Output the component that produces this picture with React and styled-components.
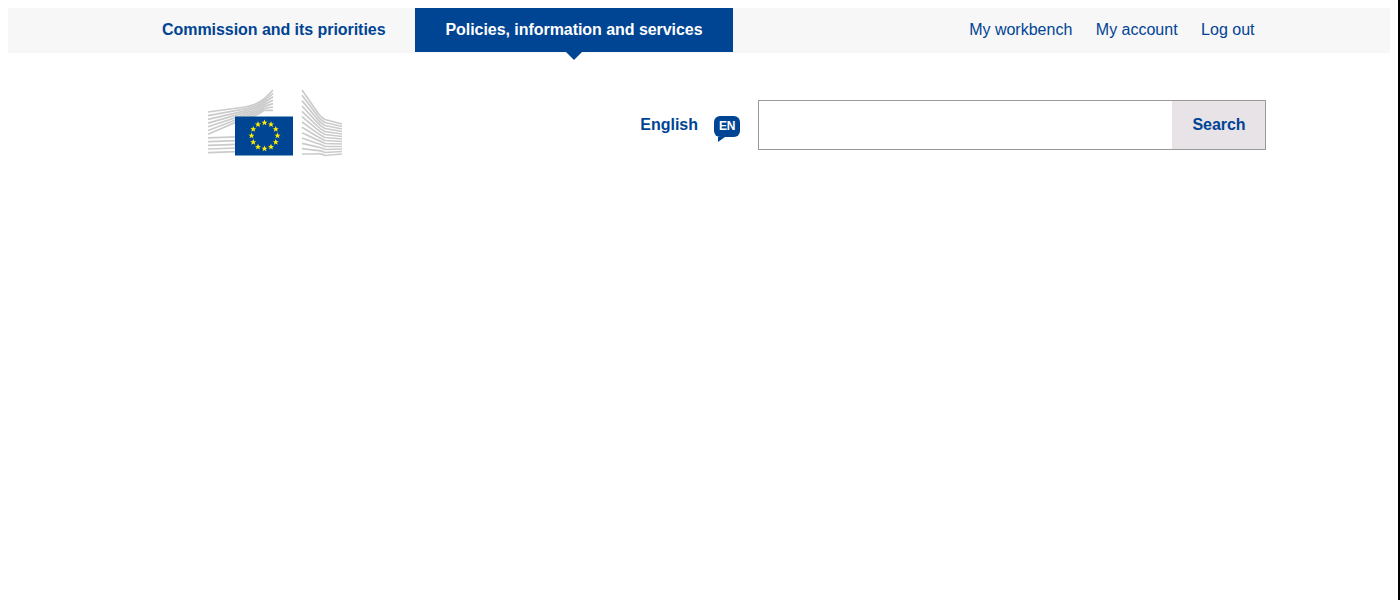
import React from "react";
import styled, { createGlobalStyle } from "styled-components";

const GlobalStyle = createGlobalStyle`
    html, body {
        margin: 0;
        padding: 0;
        background: #fff;
        overflow: hidden;
    }
    body {
        font-family: "Liberation Sans", Arial, sans-serif;
    }
`;

const Page = styled.div`
    box-sizing: border-box;
    height: 100vh;
    padding: 8px 8px 0 8px;
    border-right: 2px solid #000;
`;

const TopBar = styled.nav`
    display: flex;
    justify-content: space-between;
    height: 45px;
    padding: 0 135.5px 0 124px;
    background: #f7f7f7;
`;

const TabList = styled.div`
    display: flex;
    height: 44px;
`;

const Tab = styled.a`
    position: relative;
    display: flex;
    align-items: center;
    padding: 0 30px;
    font-size: 16px;
    font-weight: 700;
    letter-spacing: -0.05px;
    color: ${(p) => (p.$active ? "#fff" : "#004494")};
    background: ${(p) => (p.$active ? "#004494" : "transparent")};

    ${(p) =>
        p.$active &&
        `&::after {
            content: "";
            position: absolute;
            left: 50%;
            bottom: -8px;
            margin-left: -8px;
            border-style: solid;
            border-width: 8px 8px 0;
            border-color: #004494 transparent transparent;
        }`}
`;

const UserLinks = styled.div`
    display: flex;
    align-items: center;
    gap: 23.5px;
    height: 44px;
`;

const UserLink = styled.a`
    font-size: 16px;
    color: #004494;
`;

const Header = styled.header`
    display: flex;
    justify-content: space-between;
    align-items: flex-start;
    padding: 35px 124px 0 199px;
`;

const Logo = styled.svg`
    display: block;
    width: 136px;
    height: 70px;
`;

const Tools = styled.div`
    display: flex;
    align-items: center;
    margin-top: 12px;
`;

const Language = styled.a`
    font-size: 16px;
    font-weight: 700;
    color: #004494;
`;

const LangBadge = styled.span`
    position: relative;
    display: flex;
    align-items: center;
    justify-content: center;
    box-sizing: border-box;
    width: 26px;
    height: 21px;
    margin: 2px 18px 0 16px;
    font-size: 12px;
    font-weight: 700;
    letter-spacing: -0.4px;
    color: #fff;
    background: #004494;
    border-radius: 6px;

    &::after {
        content: "";
        position: absolute;
        left: 4px;
        bottom: -5px;
        border-style: solid;
        border-width: 5px 7px 0 0;
        border-color: #004494 transparent transparent;
    }
`;

const SearchBox = styled.form`
    display: flex;
    box-sizing: border-box;
    width: 508px;
    height: 50px;
    border: 1px solid #999;
`;

const SearchInput = styled.input`
    flex: 1;
    min-width: 0;
    border: none;
    outline: none;
    background: #fff;
`;

const SearchButton = styled.button`
    width: 93px;
    border: none;
    padding: 0 0 0 1px;
    font-family: inherit;
    font-size: 16px;
    font-weight: 700;
    letter-spacing: -0.05px;
    color: #004494;
    background: #e7e3e7;
`;

const leftRows = Array.from({ length: 12 }, (_, i) => i);
const rightRows = Array.from({ length: 13 }, (_, i) => i);

const leftRowPath = (i) => {
    const y = 24 + i * 3.7;
    if (i > 6) return `M1 ${y} L30 ${y - 1}`;
    const knee = 16 + i * 1.9;
    return `M1 ${y} L38 ${knee + 3} Q50 ${knee + 1} 57 ${knee - 5} L66 ${2 + i * 3.4}`;
};

const rightRowPath = (i) => {
    const t = i / 12;
    const start = 2 + t * 64;
    const knee = 30 + t * 36;
    const end = 36 + t * 30;
    const before = start + (knee - start) * 0.72;
    return `M95 ${start} L109 ${before} Q113 ${knee - 1} 118 ${knee + 1.5} L135 ${end}`;
};

const StarRing = () => {
    const stars = [];
    for (let i = 0; i < 12; i++) {
        const a = (i * Math.PI) / 6;
        stars.push(
            <polygon
                key={i}
                transform={`translate(${57.5 + 13 * Math.sin(a)} ${47.7 - 13 * Math.cos(a)}) scale(3.2)`}
                points="0,-1 0.29,-0.31 0.95,-0.31 0.41,0.12 0.59,0.81 0,0.4 -0.59,0.81 -0.41,0.12 -0.95,-0.31 -0.29,-0.31"
                fill="#ffed00"
            />
        );
    }
    return <g>{stars}</g>;
};

const EcLogo = () => (
    <Logo viewBox="0 0 136 70">
        <g fill="none" stroke="#cbcbcb" strokeWidth="1.7">
            {leftRows.map((i) => (
                <path key={i} d={leftRowPath(i)} />
            ))}
            {rightRows.map((i) => (
                <path key={i} d={rightRowPath(i)} />
            ))}
        </g>
        <rect x="28" y="28.5" width="58" height="39" fill="#004494" />
        <StarRing />
    </Logo>
);

const App = () => (
    <Page>
        <GlobalStyle />
        <TopBar>
            <TabList>
                <Tab>Commission and its priorities</Tab>
                <Tab $active>Policies, information and services</Tab>
            </TabList>
            <UserLinks>
                <UserLink>My workbench</UserLink>
                <UserLink>My account</UserLink>
                <UserLink>Log out</UserLink>
            </UserLinks>
        </TopBar>
        <Header>
            <EcLogo />
            <Tools>
                <Language>English</Language>
                <LangBadge>EN</LangBadge>
                <SearchBox onSubmit={(e) => e.preventDefault()}>
                    <SearchInput type="text" />
                    <SearchButton type="submit">Search</SearchButton>
                </SearchBox>
            </Tools>
        </Header>
    </Page>
);

export default App;
